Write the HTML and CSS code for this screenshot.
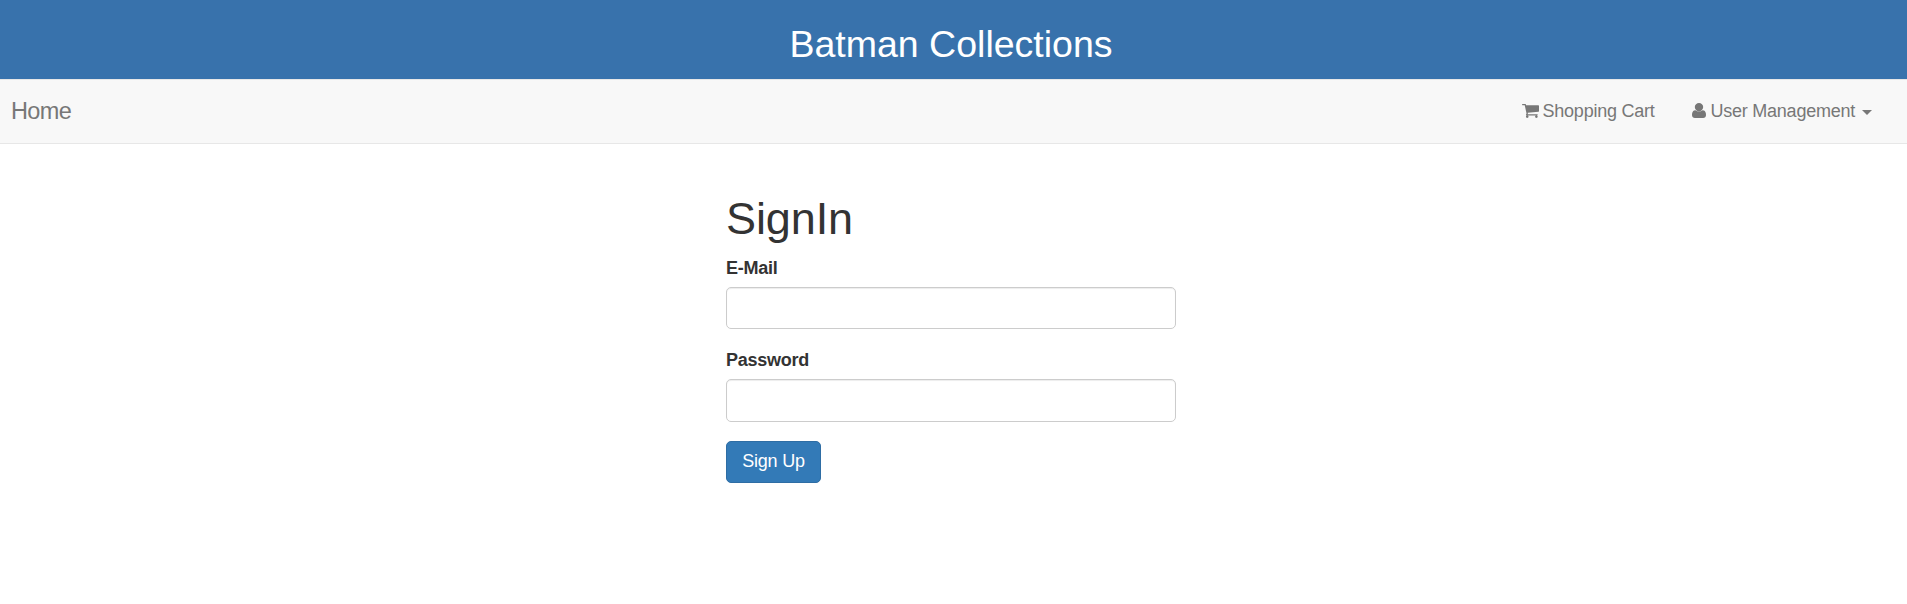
FILE: index.html
```html
<!DOCTYPE html>
<html lang="en">
<head>
<meta charset="utf-8">
<title>Batman Collections</title>
<link rel="stylesheet" href="styles.css">
</head>
<body>
<header class="banner"><h2 class="banner-title">Batman Collections</h2></header>
<nav class="navbar">
  <a class="brand">Home</a>
  <div class="links">
    <a class="link cart"><svg class="cart-icon" viewBox="0 0 1664 1408" preserveAspectRatio="none"><path d="M640 1280q0 52-38 90t-90 38-90-38-38-90 38-90 90-38 90 38 38 90zm896 0q0 52-38 90t-90 38-90-38-38-90 38-90 90-38 90 38 38 90zm128-1088v512q0 24-16.500 42.500t-40.500 21.500l-1044 122q13 60 13 70 0 16-24 64h920q26 0 45 19t19 45-19 45-45 19h-1024q-26 0-45-19t-19-45q0-11 8-31.500t16-36 21.500-40 15.500-29.500l-177-823h-204q-26 0-45-19t-19-45 19-45 45-19h256q16 0 28.500 6.500t19.500 15.500 13 24.500 8 26 5.500 29.500 4.500 26h1201q26 0 45 19t19 45z"/></svg><span class="cart-text">Shopping Cart</span></a>
    <a class="link user"><svg class="user-icon" viewBox="0 0 1280 1408" preserveAspectRatio="none"><path d="M1280 1137q0 120-73 195.500t-194 75.500h-746q-121 0-194-75.500t-73-195.500q0-93 15-175 15-83 55-151t113-108q60-34 136-34 134 131 321 131t321-131q76 0 136 34 73 40 113 108t55 151q15 82 15 175zm-256-753q0 159-112.500 271.500t-271.500 112.500-271.500-112.500-112.500-271.500 112.500-271.500 271.500-112.500 271.500 112.500 112.500 271.500z"/></svg><span class="user-text">User Management</span><span class="caret"></span></a>
  </div>
</nav>
<main class="signin">
  <h1 class="heading">SignIn</h1>
  <form class="form">
    <div class="group">
      <label class="label label-email" for="email">E-Mail</label>
      <input class="input" id="email" type="text">
    </div>
    <div class="group">
      <label class="label label-password" for="password">Password</label>
      <input class="input input-password" id="password" type="password">
    </div>
    <button class="button" type="button">Sign Up</button>
  </form>
</main>
</body>
</html>
```
FILE: styles.css
```css
* { box-sizing: border-box; }
body {
  margin: 0;
  background: #fff;
  color: #333;
  font: 18px/25px "Liberation Sans", Arial, sans-serif;
  letter-spacing: -.24px;
}
.banner {
  height: 79px;
  padding: 23px 5px 0 0;
  background: #3872ac;
  text-align: center;
}
.banner-title {
  margin: 0;
  color: #fff;
  font-size: 37.5px;
  font-weight: 500;
  line-height: 42px;
  letter-spacing: 0;
}
.navbar {
  display: flex;
  justify-content: space-between;
  align-items: center;
  height: 65px;
  padding: 0 35px 0 11px;
  background: #f8f8f8;
  border-top: 1px solid #e7e7e7;
  border-bottom: 1px solid #e7e7e7;
  color: #777;
}
.brand {
  padding-bottom: 1px;
  font-size: 23.5px;
  letter-spacing: -.65px;
}
.links { display: flex; gap: 37px; }
.link { display: flex; align-items: center; white-space: nowrap; }
.cart-icon { width: 17px; height: 14px; margin: 0 4px 1px 0; fill: #777; }
.user-icon { width: 14px; height: 15px; margin: 0 5px 2px 0; fill: #777; }
.caret {
  margin: 1px 0 0 7px;
  border: 5px solid transparent;
  border-top-color: #777;
  border-bottom: 0;
}
.signin { width: 450px; margin: 50px 0 0 726px; }
.heading {
  margin: 0 0 12px;
  font-size: 45px;
  font-weight: 500;
  line-height: 50px;
  letter-spacing: -.1px;
}
.group { margin-bottom: 19px; }
.label { display: block; margin-bottom: 6px; font-weight: 700; }
.input {
  display: block;
  width: 450px;
  height: 42px;
  padding: 7px 15px;
  border: 1px solid #ccc;
  border-radius: 5px;
  background: #fff;
  box-shadow: inset 0 1px 1px rgba(0, 0, 0, .075);
  font: inherit;
  outline: 0;
}
.input-password { height: 43px; }
.button {
  width: 95px;
  height: 42px;
  padding: 0 0 2px;
  border: 1px solid #2e6da4;
  border-radius: 5px;
  background: #337ab7;
  color: #fff;
  font: inherit;
  letter-spacing: inherit;
}
```
